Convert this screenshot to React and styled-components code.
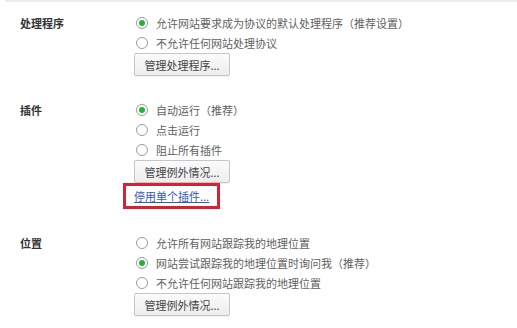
import React from "react";
import styled, { createGlobalStyle } from "styled-components";

const Global = createGlobalStyle`
  html, body { margin: 0; padding: 0; background: #fff; }
  body { font-family: "Noto Sans CJK SC", "Microsoft YaHei", sans-serif; font-size: 11px; color: #5f5f5f; }
`;

const Page = styled.div`
  width: 517px;
  height: 328px;
  overflow: hidden;
  background: #fff;
`;

const TopStrip = styled.div`
  height: 2px;
  margin-left: 5px;
  background: #ececec;
`;

const Sections = styled.div`
  display: flex;
  flex-direction: column;
  gap: 24px;
  padding-top: 11px;
`;

const Section = styled.section`
  display: grid;
  grid-template-columns: 114px 1fr;
  padding-left: 20px;
`;

const Label = styled.div`
  font-weight: bold;
  color: #333;
  line-height: 20px;
  height: 20px;
`;

const Options = styled.div`
  display: flex;
  flex-direction: column;
  align-items: flex-start;
`;

const RadioRow = styled.label`
  display: flex;
  align-items: center;
  height: 20px;
  padding-left: 2px;
  gap: 8px;
  color: #5f5f5f;
  white-space: nowrap;
`;

const Radio = styled.span`
  position: relative;
  width: 10px;
  height: 10px;
  border-radius: 50%;
  border: 1px solid #9a9a9a;
  background: #fff;
  flex: none;
  &::after {
    content: "";
    display: ${(p) => (p.$checked ? "block" : "none")};
    position: absolute;
    left: 2px;
    top: 2px;
    width: 6px;
    height: 6px;
    border-radius: 50%;
    background: #23b13c;
  }
`;

const Button = styled.button`
  width: 96px;
  height: 23px;
  margin-top: 0;
  padding: 0;
  border: 1px solid #c6c6c6;
  border-radius: 2px;
  background: linear-gradient(#fbfbfb, #ededed);
  box-shadow: 0 1px 0 rgba(0, 0, 0, 0.06);
  font-family: inherit;
  font-size: 11px;
  color: #444;
  text-align: center;
`;

const Highlight = styled.div`
  box-sizing: border-box;
  width: 97px;
  height: 26px;
  margin-left: -11px;
  border: 3px solid #d42331;
  padding-left: 8px;
  display: flex;
  align-items: center;
`;

const Link = styled.a`
  color: #3558b8;
  text-decoration: underline;
  white-space: nowrap;
`;

const sections = [
  {
    label: "处理程序",
    options: [
      ["允许网站要求成为协议的默认处理程序（推荐设置）", true],
      ["不允许任何网站处理协议", false],
    ],
    button: "管理处理程序...",
  },
  {
    label: "插件",
    options: [
      ["自动运行（推荐）", true],
      ["点击运行", false],
      ["阻止所有插件", false],
    ],
    button: "管理例外情况...",
    link: "停用单个插件...",
  },
  {
    label: "位置",
    options: [
      ["允许所有网站跟踪我的地理位置", false],
      ["网站尝试跟踪我的地理位置时询问我（推荐）", true],
      ["不允许任何网站跟踪我的地理位置", false],
    ],
    button: "管理例外情况...",
  },
];

export default function App() {
  return (
    <Page>
      <Global />
      <TopStrip />
      <Sections>
        {sections.map((s) => (
          <Section key={s.label}>
            <Label>{s.label}</Label>
            <Options>
              {s.options.map(([text, checked]) => (
                <RadioRow key={text}>
                  <Radio $checked={checked} />
                  {text}
                </RadioRow>
              ))}
              <Button>{s.button}</Button>
              {s.link && (
                <Highlight>
                  <Link href="#">{s.link}</Link>
                </Highlight>
              )}
            </Options>
          </Section>
        ))}
      </Sections>
    </Page>
  );
}
